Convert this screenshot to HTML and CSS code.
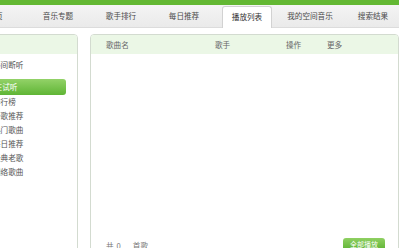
FILE: index.html
```html
<!DOCTYPE html>
<html lang="zh">
<head>
<meta charset="utf-8">
<title>播放列表</title>
<link rel="stylesheet" href="styles.css">
</head>
<body>
<div class="topbar"></div>
<nav class="nav">
  <ul class="tabs">
    <li class="tab">首页</li>
    <li class="tab">音乐专题</li>
    <li class="tab">歌手排行</li>
    <li class="tab">每日推荐</li>
    <li class="tab active">播放列表</li>
    <li class="tab">我的空间音乐</li>
    <li class="tab">搜索结果</li>
  </ul>
</nav>
<main class="content">
  <aside class="side">
    <div class="side-head"></div>
    <ul class="side-list">
      <li class="item first">不间断听</li>
      <li class="item current">正在试听</li>
      <li class="item">排行榜</li>
      <li class="item">新歌推荐</li>
      <li class="item">热门歌曲</li>
      <li class="item">每日推荐</li>
      <li class="item">经典老歌</li>
      <li class="item">网络歌曲</li>
    </ul>
  </aside>
  <section class="list">
    <div class="list-head">
      <span>歌曲名</span>
      <span>歌手</span>
      <span>操作</span>
      <span>更多</span>
    </div>
    <div class="list-body"></div>
    <div class="list-foot">
      <span class="count">共<span class="num">0</span>首歌</span>
      <span class="play-all">全部播放</span>
    </div>
  </section>
</main>
</body>
</html>
```

FILE: styles.css
```css
html, body {
  margin: 0;
  padding: 0;
  overflow: hidden;
  background: #ffffff;
}

body {
  width: 399px;
  height: 248px;
  font-family: "Noto Sans CJK SC", "Noto Sans", sans-serif;
  font-size: 7.6px;
  color: #444;
}

.topbar {
  height: 5px;
  background: #63b833;
}

.nav {
  height: 22px;
  background: linear-gradient(#f4f4f4, #eaeaea);
  border-bottom: 1px solid #dcdcdc;
}

.tabs {
  list-style: none;
  margin: 0 0 0 -30px;
  padding: 0;
  display: flex;
  gap: 13px;
}

.tab {
  width: 50px;
  height: 21px;
  margin-top: 1px;
  line-height: 20px;
  text-align: center;
  color: #4a4a4a;
  white-space: nowrap;
  box-sizing: border-box;
}

.tab.active {
  height: 22px;
  background: #ffffff;
  border: 1px solid #d2d2d2;
  border-bottom: none;
  border-radius: 3px 3px 0 0;
  color: #333;
}

.content {
  display: flex;
  gap: 12px;
  margin-top: 6px;
}

.side {
  width: 98px;
  margin-left: -20px;
  height: 240px;
  border: 1px solid #d3dbd0;
  border-radius: 4px 4px 0 0;
  box-sizing: border-box;
  flex: none;
}

.side-head {
  height: 19px;
  background: #ebf7e6;
  border-radius: 3px 3px 0 0;
}

.side-list {
  list-style: none;
  margin: 0;
  padding: 4px 0 0 0;
}

.item {
  height: 14px;
  line-height: 14px;
  padding-left: 12px;
  color: #555;
  white-space: nowrap;
}

.item.current {
  height: 16px;
  line-height: 16px;
  margin: 7px 11px 0 2px;
  padding-left: 4px;
  border-radius: 3px;
  background: linear-gradient(#93d268, #5fb535);
  color: #ffffff;
}

.list {
  flex: 1;
  height: 240px;
  border: 1px solid #d3dbd0;
  border-radius: 4px 4px 0 0;
  box-sizing: border-box;
  display: flex;
  flex-direction: column;
}

.list-head {
  height: 19px;
  line-height: 19px;
  background: #ebf7e6;
  border-radius: 3px 3px 0 0;
  display: grid;
  grid-template-columns: 109px 71px 41px auto;
  padding-left: 15px;
  color: #666;
}

.list-body {
  height: 184px;
}

.list-foot {
  display: flex;
  justify-content: space-between;
  align-items: flex-start;
  padding: 0 13px 0 15px;
  color: #777;
}

.count {
  line-height: 14px;
  padding-top: 1px;
}

.num {
  margin: 0 12px 0 3px;
}

.play-all {
  width: 42px;
  height: 14px;
  line-height: 13px;
  text-align: center;
  border-radius: 3px;
  background: linear-gradient(#8fd062, #57ae2c);
  color: #ffffff;
  font-size: 7px;
}
```
